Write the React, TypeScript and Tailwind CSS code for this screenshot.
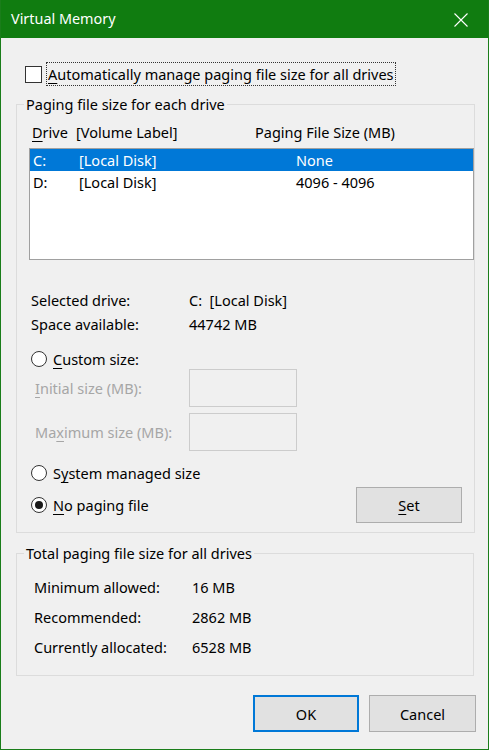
import React from "react";

const U = ({ children }: { children: React.ReactNode }) => (
  <span className="underline decoration-1 underline-offset-[3px]">{children}</span>
);

function Radio({ checked }: { checked?: boolean }) {
  return (
    <span className="flex h-[16px] w-[16px] shrink-0 items-center justify-center rounded-full border border-[#333333] bg-white">
      {checked && <span className="h-[8px] w-[8px] rounded-full bg-[#1a1a1a]" />}
    </span>
  );
}

export default function App() {
  return (
    <div className="h-[750px] w-[489px] overflow-hidden border-x border-b border-[#1a7d1a] bg-[#f0f0f0] font-['Noto_Sans',sans-serif] text-[14.5px] leading-[20px] text-black">
      {/* Title bar */}
      <div className="-mx-px flex h-[38px] items-center justify-between bg-[#107c10] pl-[11px] pr-[21px] text-[14.4px] text-white">
        <span>Virtual Memory</span>
        <svg width="14" height="14" viewBox="0 0 14 14" className="mt-[1px]">
          <path d="M0.5 0.5 L13.5 13.5 M13.5 0.5 L0.5 13.5" stroke="white" strokeWidth="1.1" fill="none" />
        </svg>
      </div>

      {/* Auto manage checkbox */}
      <div className="mt-[24px] flex h-[24px] items-center pl-[24px]">
        <span className="h-[17px] w-[17px] border border-[#333333] bg-white" />
        <span className="ml-[4px] flex h-[24px] items-center border border-dotted border-[#333333] px-[1px]">
          <span>
            <U>A</U>utomatically manage paging file size for all drives
          </span>
        </span>
      </div>

      {/* Group 1 */}
      <fieldset className="ml-[15px] mt-[8px] w-[458px] border border-[#dcdcdc] pb-[9px]">
        <legend className="ml-[7px] px-[2px] leading-[20px]">Paging file size for each drive</legend>
        <div className="mt-[8px] flex h-[20px] items-center pl-[15px]">
          <span className="w-[44px]">
            <U>D</U>rive
          </span>
          <span className="w-[179px]">[Volume Label]</span>
          <span>Paging File Size (MB)</span>
        </div>
        <div className="ml-[12px] mt-[6px] h-[112px] w-[445px] border border-[#a0a0a0] bg-white">
          <div className="flex h-[22px] items-center bg-[#0078d7] pl-[3px] text-white">
            <span className="w-[46px]">C:</span>
            <span className="w-[217px]">[Local Disk]</span>
            <span>None</span>
          </div>
          <div className="flex h-[22px] items-center pl-[3px]">
            <span className="w-[46px]">D:</span>
            <span className="w-[217px]">[Local Disk]</span>
            <span>4096 - 4096</span>
          </div>
        </div>

        <div className="mt-[30px] flex h-[20px] items-center pl-[14px]">
          <span className="w-[158px]">Selected drive:</span>
          <span className="whitespace-pre">C:  [Local Disk]</span>
        </div>
        <div className="mt-[4px] flex h-[20px] items-center pl-[14px]">
          <span className="w-[158px]">Space available:</span>
          <span>44742 MB</span>
        </div>

        <div className="mt-[15px] flex h-[20px] items-center gap-[6px] pl-[14px]">
          <Radio />
          <span>
            <U>C</U>ustom size:
          </span>
        </div>
        <div className="flex h-[38px] items-center pl-[18px] text-[#a6a6a6]">
          <span className="w-[154px]">
            <U>I</U>nitial size (MB):
          </span>
          <span className="h-[38px] w-[108px] border border-[#cccccc]" />
        </div>
        <div className="mt-[6px] flex h-[38px] items-center pl-[18px] text-[#a6a6a6]">
          <span className="w-[154px]">
            Ma<U>x</U>imum size (MB):
          </span>
          <span className="h-[38px] w-[108px] border border-[#cccccc]" />
        </div>

        <div className="mt-[12px] flex h-[20px] items-center gap-[6px] pl-[14px]">
          <Radio />
          <span>
            S<U>y</U>stem managed size
          </span>
        </div>
        <div className="mt-[4px] flex h-[36px] items-center justify-between pl-[14px] pr-[12px]">
          <div className="flex items-center gap-[6px]">
            <Radio checked />
            <span>
              <U>N</U>o paging file
            </span>
          </div>
          <button className="h-[36px] w-[106px] border border-[#adadad] bg-[#e1e1e1]">
            <U>S</U>et
          </button>
        </div>
      </fieldset>

      {/* Group 2 */}
      <fieldset className="ml-[15px] mt-[10px] w-[458px] border border-[#dcdcdc] pb-[18px]">
        <legend className="ml-[7px] px-[2px] leading-[20px]">Total paging file size for all drives</legend>
        <div className="mt-[14px] flex flex-col gap-[10px] pl-[17px]">
          <div className="flex h-[20px] items-center">
            <span className="w-[158px]">Minimum allowed:</span>
            <span>16 MB</span>
          </div>
          <div className="flex h-[20px] items-center">
            <span className="w-[158px]">Recommended:</span>
            <span>2862 MB</span>
          </div>
          <div className="flex h-[20px] items-center">
            <span className="w-[158px]">Currently allocated:</span>
            <span>6528 MB</span>
          </div>
        </div>
      </fieldset>

      {/* Buttons */}
      <div className="mt-[19px] flex justify-end gap-[10px] pr-[12px]">
        <button className="h-[37px] w-[106px] border-2 border-[#0078d7] bg-[#e1e1e1]">OK</button>
        <button className="h-[37px] w-[107px] border border-[#adadad] bg-[#e1e1e1]">Cancel</button>
      </div>
    </div>
  );
}
